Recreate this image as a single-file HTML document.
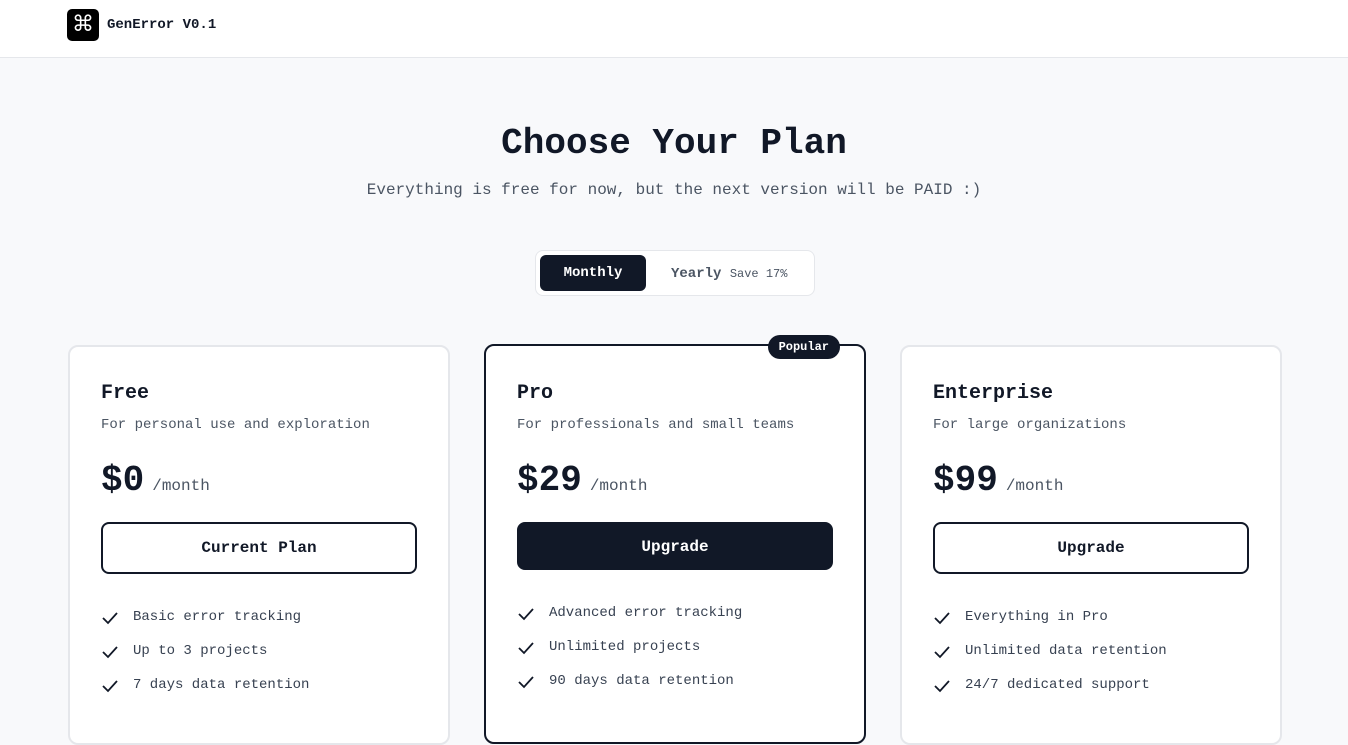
<!DOCTYPE html>
<html><head><style>
*{box-sizing:border-box;margin:0;padding:0}
body{width:1348px;height:685px;overflow:hidden;background:#f8f9fb;font-family:"Liberation Mono",monospace;color:#111827}
.hdr{height:58px;background:#fff;border-bottom:1px solid #e5e7eb;position:relative}
.logo{position:absolute;left:67px;top:9px;width:32px;height:32px;background:#000;border-radius:5px;color:#fff;font-size:22px;line-height:32px;text-align:center;font-family:"DejaVu Sans",sans-serif}
.brand{position:absolute;left:107px;top:17px;font-size:14px;font-weight:bold;color:#111827}
h1{position:absolute;left:0;width:1348px;top:120px;text-align:center;font-size:36px;font-weight:bold;line-height:48px}
.sub{position:absolute;left:0;width:1348px;top:179px;text-align:center;font-size:16px;color:#4b5563;line-height:22px}
.tog{position:absolute;left:535px;top:250px;width:280px;height:46px;background:#fff;border:1px solid #e5e7eb;border-radius:8px}
.mon{position:absolute;left:4px;top:4px;width:106px;height:36px;background:#111827;color:#fff;border-radius:6px;font-size:14px;font-weight:bold;text-align:center;line-height:36px}
.yr{position:absolute;left:135px;top:5px;line-height:36px;font-size:14px;color:#4b5563;font-weight:bold}
.yr small{font-size:12px;font-weight:normal}
.card{position:absolute;top:345px;width:382px;height:400px;background:#fff;border:2px solid #e5e7eb;border-radius:10px;padding:0 0 0 31px}
.card.pro{border-color:#111827;top:344px}
.badge{position:absolute;right:24px;top:-11px;background:#111827;color:#fff;font-size:12px;font-weight:bold;padding:0 11px;height:24px;line-height:24px;border-radius:12px}
.nm{position:absolute;left:31px;top:35px;font-size:20px;font-weight:bold}
.ds{position:absolute;left:31px;top:70px;font-size:14px;color:#4b5563}
.pr{position:absolute;left:31px;top:109px;font-size:36px;font-weight:bold;line-height:50px}
.pr span{font-size:16px;font-weight:normal;color:#4b5563;margin-left:8px}
.btn{position:absolute;left:31px;top:175px;width:316px;height:52px;border:2px solid #111827;border-radius:8px;font-size:16px;font-weight:bold;text-align:center;line-height:48px}
.pro .btn{top:176px;height:48px;background:#111827;color:#fff;line-height:46px}
.ft{position:absolute;left:31px;font-size:14px;color:#374151;padding-left:32px;line-height:20px}
.ft svg{position:absolute;left:0;top:3px}
</style></head><body>
<div class="hdr"><div class="logo">⌘</div><div class="brand">GenError V0.1</div></div>
<h1>Choose Your Plan</h1>
<div class="sub">Everything is free for now, but the next version will be PAID :)</div>
<div class="tog"><div class="mon">Monthly</div><div class="yr">Yearly <small>Save 17%</small></div></div>

<div class="card" style="left:68px">
<div class="nm">Free</div><div class="ds">For personal use and exploration</div>
<div class="pr">$0<span>/month</span></div>
<div class="btn">Current Plan</div>
<div class="ft" style="top:260px"><svg width="18" height="16"><path d="M2 8l5 5L16 3" stroke="#111827" stroke-width="1.8" fill="none"/></svg>Basic error tracking</div>
<div class="ft" style="top:294px"><svg width="18" height="16"><path d="M2 8l5 5L16 3" stroke="#111827" stroke-width="1.8" fill="none"/></svg>Up to 3 projects</div>
<div class="ft" style="top:328px"><svg width="18" height="16"><path d="M2 8l5 5L16 3" stroke="#111827" stroke-width="1.8" fill="none"/></svg>7 days data retention</div>
</div>

<div class="card pro" style="left:484px">
<div class="badge">Popular</div>
<div class="nm" style="top:36px">Pro</div><div class="ds" style="top:71px">For professionals and small teams</div>
<div class="pr" style="top:110px">$29<span>/month</span></div>
<div class="btn">Upgrade</div>
<div class="ft" style="top:257px"><svg width="18" height="16"><path d="M2 8l5 5L16 3" stroke="#111827" stroke-width="1.8" fill="none"/></svg>Advanced error tracking</div>
<div class="ft" style="top:291px"><svg width="18" height="16"><path d="M2 8l5 5L16 3" stroke="#111827" stroke-width="1.8" fill="none"/></svg>Unlimited projects</div>
<div class="ft" style="top:325px"><svg width="18" height="16"><path d="M2 8l5 5L16 3" stroke="#111827" stroke-width="1.8" fill="none"/></svg>90 days data retention</div>
</div>

<div class="card" style="left:900px">
<div class="nm">Enterprise</div><div class="ds">For large organizations</div>
<div class="pr">$99<span>/month</span></div>
<div class="btn">Upgrade</div>
<div class="ft" style="top:260px"><svg width="18" height="16"><path d="M2 8l5 5L16 3" stroke="#111827" stroke-width="1.8" fill="none"/></svg>Everything in Pro</div>
<div class="ft" style="top:294px"><svg width="18" height="16"><path d="M2 8l5 5L16 3" stroke="#111827" stroke-width="1.8" fill="none"/></svg>Unlimited data retention</div>
<div class="ft" style="top:328px"><svg width="18" height="16"><path d="M2 8l5 5L16 3" stroke="#111827" stroke-width="1.8" fill="none"/></svg>24/7 dedicated support</div>
</div>
</body></html>
